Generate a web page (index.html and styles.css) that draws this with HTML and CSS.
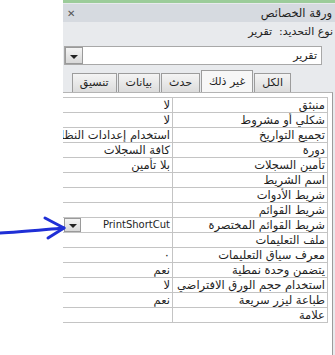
FILE: index.html
```html
<!DOCTYPE html>
<html lang="ar">
<head>
  <meta charset="UTF-8" />
  <title>ورقة الخصائص</title>
  <link rel="stylesheet" href="styles.css">
</head>
<body>

<div class="page">
  <svg class="arrow" width="70" height="30" viewBox="0 0 70 30">
    <path d="M0 22 C20 21 40 19 64 17" />
    <path d="M45 7 L64 17 L48 27" />
  </svg>

  <div class="panel" dir="rtl">
    <div class="title-bar">
      <span class="title">ورقة الخصائص</span>
      <span class="close">&#x2715;</span>
    </div>

    <div class="sel-type">نوع التحديد:&nbsp; تقرير</div>

    <div class="combo">
      <span class="combo-text">تقرير</span>
      <span class="drop-btn"><i></i></span>
    </div>

    <div class="tabs">
      <span class="tab">الكل</span>
      <span class="tab active">غير ذلك</span>
      <span class="tab">حدث</span>
      <span class="tab">بيانات</span>
      <span class="tab">تنسيق</span>
    </div>

    <div class="grid">
      <div class="row"><span class="label">منبثق</span><span class="value">لا</span></div>
      <div class="row"><span class="label">شكلي أو مشروط</span><span class="value">لا</span></div>
      <div class="row"><span class="label">تجميع التواريخ</span><span class="value">استخدام إعدادات النظام</span></div>
      <div class="row"><span class="label">دورة</span><span class="value">كافة السجلات</span></div>
      <div class="row"><span class="label">تأمين السجلات</span><span class="value">بلا تأمين</span></div>
      <div class="row"><span class="label">اسم الشريط</span><span class="value"></span></div>
      <div class="row"><span class="label">شريط الأدوات</span><span class="value"></span></div>
      <div class="row"><span class="label">شريط القوائم</span><span class="value"></span></div>
      <div class="row"><span class="label">شريط القوائم المختصرة</span><span class="value with-btn"><span class="latin">PrintShortCut</span><span class="drop-btn small"><i></i></span></span></div>
      <div class="row"><span class="label">ملف التعليمات</span><span class="value"></span></div>
      <div class="row"><span class="label">معرف سياق التعليمات</span><span class="value">٠</span></div>
      <div class="row"><span class="label">يتضمن وحدة نمطية</span><span class="value">نعم</span></div>
      <div class="row"><span class="label">استخدام حجم الورق الافتراضي</span><span class="value">لا</span></div>
      <div class="row"><span class="label">طباعة ليزر سريعة</span><span class="value">نعم</span></div>
      <div class="row"><span class="label">علامة</span><span class="value"></span></div>
    </div>
  </div>
</div>

</body>
</html>
```

FILE: styles.css
```css
*,
*::before,
*::after {
  box-sizing: border-box;
  margin: 0;
  padding: 0;
}

body {
  font-family: "DejaVu Sans", Tahoma, sans-serif;
  font-size: 11px;
  color: #1e1e1e;
  background: #fff;
}

.page {
  position: relative;
  width: 335px;
  height: 355px;
  overflow: hidden;
}

.arrow {
  position: absolute;
  left: 0;
  top: 211px;
}

.arrow path {
  fill: none;
  stroke: #1f2fd6;
  stroke-width: 3;
  stroke-linecap: round;
  stroke-linejoin: round;
}

.panel {
  margin-left: 63px;
  height: 355px;
  background: #e8eaed;
  border-top: 3px solid #9ccc9a;
  display: flex;
  flex-direction: column;
}

.title-bar {
  height: 18px;
  margin-top: 1px;
  background: #d6dae0;
  display: flex;
  align-items: center;
  justify-content: space-between;
  padding: 0 3px 0 4px;
}

.title {
  font-size: 11.5px;
}

.close {
  color: #555;
  font-size: 10px;
  font-weight: bold;
}

.sel-type {
  height: 20px;
  line-height: 20px;
  padding-right: 2px;
}

.combo {
  margin: 4px 13px 0 1px;
  height: 19px;
  background: #fff;
  border: 1px solid #a8a8a8;
  display: flex;
  align-items: center;
  justify-content: space-between;
  padding-right: 4px;
}

.drop-btn {
  width: 18px;
  height: 17px;
  background: linear-gradient(#f4f4f4, #d8d8d8);
  border: 1px solid #9a9a9a;
  display: flex;
  align-items: center;
  justify-content: center;
}

.drop-btn i {
  width: 0;
  height: 0;
  border-left: 4px solid transparent;
  border-right: 4px solid transparent;
  border-top: 4px solid #222;
  margin-top: 2px;
}

.drop-btn.small {
  height: 14px;
  width: 17px;
  margin-left: 1px;
}

.tabs {
  display: flex;
  align-items: flex-end;
  height: 23px;
  margin-top: 4px;
  padding-right: 44px;
  gap: 1px;
}

.tab {
  height: 19px;
  line-height: 18px;
  padding: 0 7px;
  background: linear-gradient(#f4f4f4, #dcdcdc);
  border: 1px solid #9c9c9c;
  border-bottom: none;
  white-space: nowrap;
}

.tab.active {
  height: 22px;
  line-height: 21px;
  background: #f7f7f7;
}

.grid {
  flex: 1;
  background: #fff;
  border-top: 1px solid #b4b4b4;
  border-right: 1px solid #9c9c9c;
  margin-right: 2px;
  padding-top: 4px;
  font-size: 11.5px;
}

.row {
  display: flex;
  height: 15px;
  border-bottom: 1px solid #c4c4c4;
  margin-right: 4px;
  border-right: 1px solid #c4c4c4;
}

.row:first-child {
  border-top: 1px solid #c4c4c4;
  height: 16px;
}

.label {
  width: 155px;
  flex: none;
  padding-right: 2px;
  line-height: 14px;
  border-left: 1px solid #c4c4c4;
  white-space: nowrap;
  overflow: hidden;
}

.value {
  flex: 1;
  min-width: 0;
  padding-right: 2px;
  line-height: 14px;
  white-space: nowrap;
  overflow: hidden;
}

.value.with-btn {
  display: flex;
  justify-content: space-between;
  align-items: center;
}

.latin {
  font-size: 10px;
}
```
